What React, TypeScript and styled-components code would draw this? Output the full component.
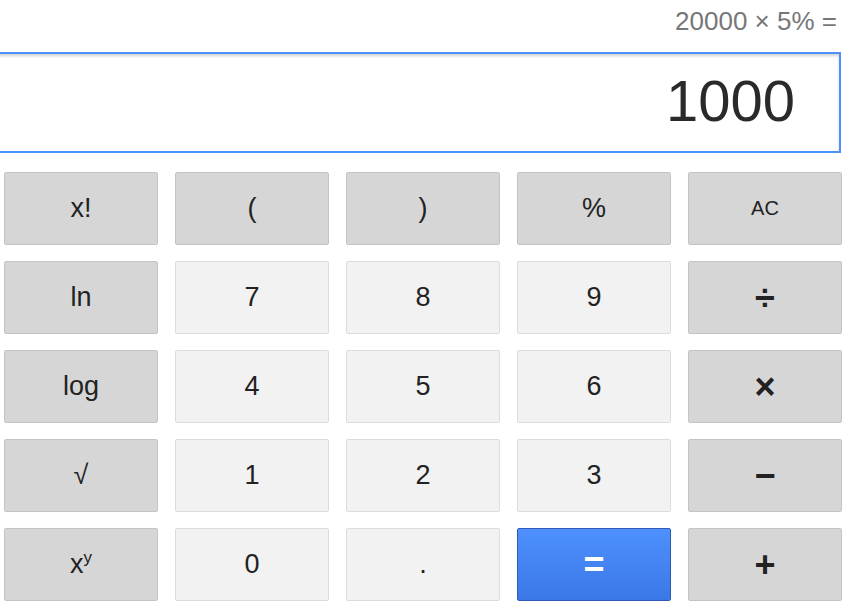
import styled, { createGlobalStyle } from 'styled-components';

type Kind = 'op' | 'num' | 'eq';

interface Key {
  label: string;
  kind: Kind;
  small?: boolean;
  symbol?: boolean;
  sup?: string;
}

const keys: Key[] = [
  { label: 'x!', kind: 'op' },
  { label: '(', kind: 'op' },
  { label: ')', kind: 'op' },
  { label: '%', kind: 'op' },
  { label: 'AC', kind: 'op', small: true },
  { label: 'ln', kind: 'op' },
  { label: '7', kind: 'num' },
  { label: '8', kind: 'num' },
  { label: '9', kind: 'num' },
  { label: '÷', kind: 'op', symbol: true },
  { label: 'log', kind: 'op' },
  { label: '4', kind: 'num' },
  { label: '5', kind: 'num' },
  { label: '6', kind: 'num' },
  { label: '×', kind: 'op', symbol: true },
  { label: '√', kind: 'op' },
  { label: '1', kind: 'num' },
  { label: '2', kind: 'num' },
  { label: '3', kind: 'num' },
  { label: '−', kind: 'op', symbol: true },
  { label: 'x', kind: 'op', sup: 'y' },
  { label: '0', kind: 'num' },
  { label: '.', kind: 'num' },
  { label: '=', kind: 'eq' },
  { label: '+', kind: 'op', symbol: true },
];

const App = () => {
  return (
    <>
      <GlobalStyle />
      <Calculator>
        <History>20000 × 5% =</History>
        <Display>1000</Display>
        <Keypad>
          {keys.map((key, i) => (
            <KeyButton
              key={i}
              $kind={key.kind}
              $small={key.small}
              $symbol={key.symbol}
            >
              {key.label}
              {key.sup && <Sup>{key.sup}</Sup>}
            </KeyButton>
          ))}
        </Keypad>
      </Calculator>
    </>
  );
};

const GlobalStyle = createGlobalStyle`
  html, body {
    margin: 0;
    padding: 0;
    background: #fff;
    overflow: hidden;
  }
  body {
    font-family: "Liberation Sans", Arial, sans-serif;
  }
`;

const Calculator = styled.div`
  width: 852px;
  height: 612px;
  display: flex;
  flex-direction: column;
`;

const History = styled.div`
  height: 52px;
  padding: 6px 15px 0 0;
  box-sizing: border-box;
  text-align: right;
  font-size: 26px;
  line-height: 30px;
  color: #777;
`;

const Display = styled.div`
  margin-left: -12px;
  width: 853px;
  height: 101px;
  box-sizing: border-box;
  border: 2px solid #4d90fe;
  box-shadow: inset 0 2px 3px rgba(0, 0, 0, 0.18);
  padding: 0 44px 0 0;
  text-align: right;
  font-size: 58px;
  line-height: 94px;
  color: #2a2a2a;
`;

const Keypad = styled.div`
  display: grid;
  grid-template-columns: repeat(5, 154px);
  grid-auto-rows: 73px;
  column-gap: 17px;
  row-gap: 16px;
  padding: 19px 0 0 4px;
`;

const palette = {
  op: { bg: '#d6d6d6', border: '#c4c4c4', color: '#222' },
  num: { bg: '#f2f2f2', border: '#dcdcdc', color: '#222' },
  eq: { bg: 'linear-gradient(#4d90fe, #3b78e7)', border: '#2f5bb7', color: '#fff' },
};

const KeyButton = styled.button<{ $kind: Kind; $small?: boolean; $symbol?: boolean }>`
  box-sizing: border-box;
  margin: 0;
  padding: 0;
  border: 1px solid ${({ $kind }) => palette[$kind].border};
  border-radius: 2px;
  background: ${({ $kind }) => palette[$kind].bg};
  color: ${({ $kind }) => palette[$kind].color};
  font-family: "Liberation Sans", Arial, sans-serif;
  font-size: ${({ $small, $kind, $symbol }) =>
    $small ? '20px' : $kind === 'eq' || $symbol ? '36px' : '27px'};
  font-weight: ${({ $kind, $symbol }) => ($kind === 'eq' || $symbol ? 700 : 400)};
  display: flex;
  align-items: center;
  justify-content: center;
`;

const Sup = styled.span`
  font-size: 17px;
  align-self: center;
  margin-top: -14px;
  line-height: 1;
`;

export default App;
